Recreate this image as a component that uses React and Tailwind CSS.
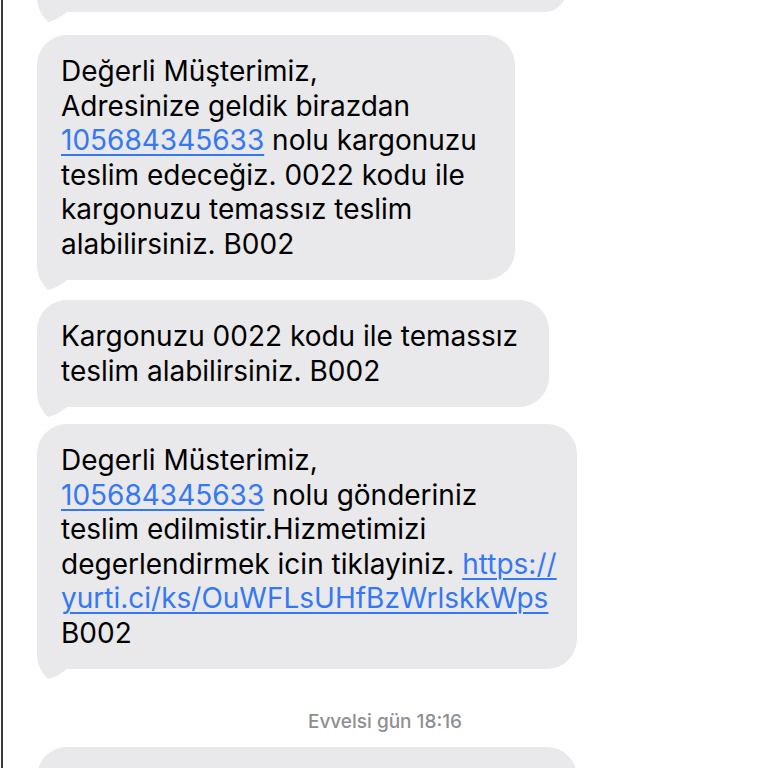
const link = "text-[#3478f6] underline decoration-[1.5px] underline-offset-[4px]";

function Bubble({ width, className = "", children }) {
  return (
    <div className={`relative ${className}`} style={{ width }}>
      <div className="relative z-10 whitespace-nowrap rounded-[30px] bg-[#e9e9eb] pl-[24px] pr-2 py-[19px] text-[28px] leading-[34.5px] text-black">
        {children}
      </div>
      {/* tail */}
      <svg
        className="absolute left-0 -bottom-[11px] z-0"
        width="44"
        height="42"
        viewBox="0 0 44 42"
      >
        <path
          d="M0 0 L0 16 C0 27 5 35 11 41 C19 39 25 35 30 31 L44 31 L44 0 Z"
          fill="#e9e9eb"
        />
      </svg>
    </div>
  );
}

export default function App() {
  return (
    <div
      className="h-screen overflow-hidden bg-white"
      style={{ fontFamily: "Inter, 'Noto Sans', sans-serif" }}
    >
      <div className="ml-[1px] h-full border-l-2 border-[#3a3a3a] pl-[34px] flex flex-col">
        {/* previous bubble, cut off at the top */}
        <Bubble width={529} className="-mt-[30px]">
          <div className="h-[4px]" />
        </Bubble>

        <Bubble width={478} className="mt-[23px]">
          <div>Değerli Müşterimiz,</div>
          <div>Adresinize geldik birazdan</div>
          <div>
            <span className={link}>105684345633</span> nolu kargonuzu
          </div>
          <div>teslim edeceğiz. 0022 kodu ile</div>
          <div>kargonuzu temassız teslim</div>
          <div>alabilirsiniz. B002</div>
        </Bubble>

        <Bubble width={512} className="mt-[20px]">
          <div>Kargonuzu 0022 kodu ile temassız</div>
          <div>teslim alabilirsiniz. B002</div>
        </Bubble>

        <Bubble width={540} className="mt-[17px]">
          <div>Degerli Müsterimiz,</div>
          <div>
            <span className={link}>105684345633</span> nolu gönderiniz
          </div>
          <div>teslim edilmistir.Hizmetimizi</div>
          <div>
            degerlendirmek icin tiklayiniz.{" "}
            <span className={link}>https://</span>
          </div>
          <div>
            <span className={link}>yurti.ci/ks/OuWFLsUHfBzWrlskkWps</span>
          </div>
          <div>B002</div>
        </Bubble>

        <div className="mt-[42px] -ml-[35px] text-center text-[19px] leading-[22px] font-medium text-[#8e8e93]">
          Evvelsi gün 18:16
        </div>

        <Bubble width={540} className="mt-[14px]">
          <div className="h-[60px]" />
        </Bubble>
      </div>
    </div>
  );
}
